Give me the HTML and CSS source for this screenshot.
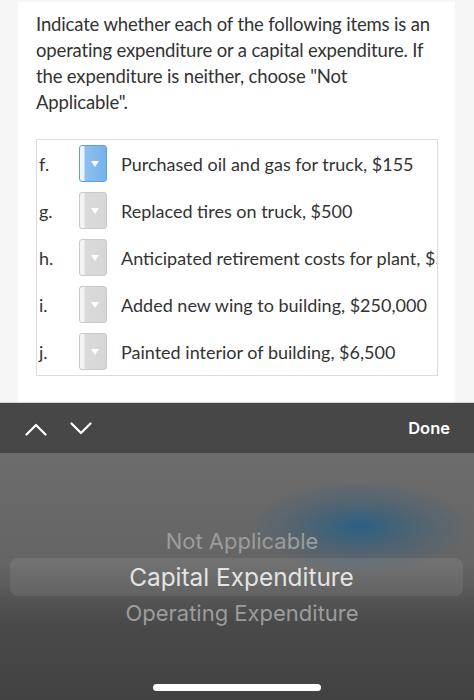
FILE: index.html
```html
<!DOCTYPE html>
<html lang="en">
<head>
    <meta charset="UTF-8">
    <meta name="viewport" content="width=device-width, initial-scale=1.0">
    <title>Expenditures</title>
    <link rel="stylesheet" href="styles.css">
</head>
<body>
    <div class="page">
        <div class="card">
            <p class="question">Indicate whether each of the following items is an operating expenditure or a capital expenditure. If the expenditure is neither, choose "Not Applicable".</p>

            <div class="items">
                <div class="row">
                    <span class="label">f.</span>
                    <span class="dropdown active"><span class="arrow"></span></span>
                    <span class="desc">Purchased oil and gas for truck, $155</span>
                </div>
                <div class="row">
                    <span class="label">g.</span>
                    <span class="dropdown"><span class="arrow"></span></span>
                    <span class="desc">Replaced tires on truck, $500</span>
                </div>
                <div class="row">
                    <span class="label">h.</span>
                    <span class="dropdown"><span class="arrow"></span></span>
                    <span class="desc">Anticipated retirement costs for plant, $500,000</span>
                </div>
                <div class="row">
                    <span class="label">i.</span>
                    <span class="dropdown"><span class="arrow"></span></span>
                    <span class="desc">Added new wing to building, $250,000</span>
                </div>
                <div class="row">
                    <span class="label">j.</span>
                    <span class="dropdown"><span class="arrow"></span></span>
                    <span class="desc">Painted interior of building, $6,500</span>
                </div>
            </div>
        </div>
    </div>

    <div class="toolbar">
        <div class="nav">
            <svg width="22" height="14" viewBox="0 0 22 14"><polyline points="1.5,12.5 11,3 20.5,12.5" fill="none" stroke="#fff" stroke-width="2.2" stroke-linecap="round" stroke-linejoin="round"/></svg>
            <svg width="22" height="14" viewBox="0 0 22 14"><polyline points="1.5,1.5 11,11 20.5,1.5" fill="none" stroke="#fff" stroke-width="2.2" stroke-linecap="round" stroke-linejoin="round"/></svg>
        </div>
        <span class="done">Done</span>
    </div>

    <div class="picker">
        <div class="option">Not Applicable</div>
        <div class="option selected">Capital Expenditure</div>
        <div class="option">Operating Expenditure</div>
        <div class="home-bar"></div>
    </div>
</body>
</html>
```

FILE: styles.css
```css
body {
    margin: 0;
    height: 700px;
    display: flex;
    flex-direction: column;
    background-color: #f6f6f6;
    font-family: Lato, "Open Sans", sans-serif;
    overflow: hidden;
}
.page {
    height: 402px;
    overflow: hidden;
}
.card {
    margin: 2px 19px 0 18px;
    height: 400px;
    padding: 9px 16px 0 18px;
    background: #fff;
    box-sizing: border-box;
}
.question {
    margin: 0 0 24px;
    font-size: 18.5px;
    letter-spacing: -0.15px;
    line-height: 26px;
    color: #333;
}
.items {
    border: 1px solid #dcdcdc;
    width: 402px;
    box-sizing: border-box;
}
.row {
    display: grid;
    grid-template-columns: 40px 42px 1fr;
    align-items: center;
    height: 47px;
    padding-left: 2px;
}
.label {
    font-size: 18px;
    color: #333;
}
.dropdown {
    width: 28px;
    height: 37px;
    box-sizing: border-box;
    border: 1px solid #c9c9c9;
    border-radius: 3px;
    background: linear-gradient(to right, #f4f4f4 0, #f4f4f4 4px, #dadada 5px, #d7d7d7 100%);
    display: flex;
    align-items: center;
    justify-content: center;
}
.dropdown.active {
    border-color: #5e9fe2;
    background: linear-gradient(to right, #eef5fd 0, #eef5fd 4px, #8dc0f0 5px, #77b2ec 100%);
}
.arrow {
    width: 0;
    height: 0;
    margin-left: 4px;
    border-left: 4px solid transparent;
    border-right: 4px solid transparent;
    border-top: 6px solid #fff;
}
.desc {
    font-size: 18px;
    color: #333;
    white-space: nowrap;
    overflow: hidden;
}
.toolbar {
    height: 50px;
    border-top: 1px solid #d4d4d4;
    background: #474747;
    display: flex;
    align-items: center;
    justify-content: space-between;
    padding: 0 24px 0 25px;
}
.nav {
    display: flex;
    gap: 23px;
    padding-top: 1px;
}
.done {
    font-family: Inter, Roboto, sans-serif;
    font-weight: 600;
    font-size: 16.5px;
    color: #fff;
}
.picker {
    flex: 1;
    display: flex;
    flex-direction: column;
    padding-top: 70px;
    font-family: Inter, Roboto, sans-serif;
    background:
        radial-gradient(ellipse 110px 46px at 360px 74px, rgba(40, 96, 132, 0.95), rgba(62, 96, 122, 0.5) 55%, transparent 100%),
        linear-gradient(#6c6c6c 0%, #656565 45%, #4a4a4a 68%, #424242 100%);
}
.option {
    height: 36px;
    padding-left: 10px;
    display: flex;
    align-items: center;
    justify-content: center;
    font-size: 22px;
    color: #9c9c9c;
}
.option.selected {
    height: 38px;
    margin: -1px 11px -1px 10px;
    border-radius: 8px;
    background: rgba(255, 255, 255, 0.08);
    font-size: 24.4px;
    color: #e4e4e4;
}
.home-bar {
    width: 168px;
    height: 7px;
    border-radius: 4px;
    background: #fff;
    margin: auto auto 9px;
}
```
